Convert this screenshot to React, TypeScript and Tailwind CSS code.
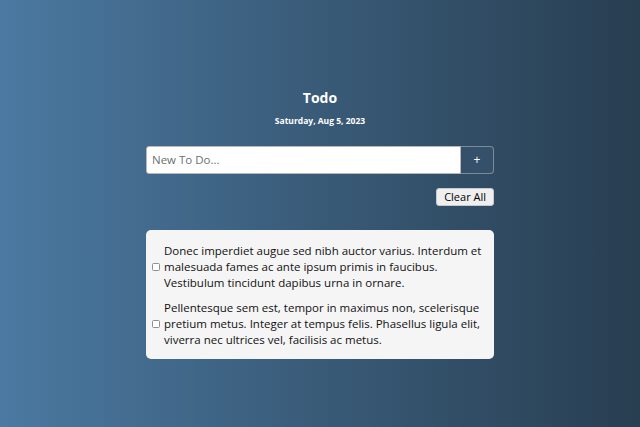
const todos = [
  "Donec imperdiet augue sed nibh auctor varius. Interdum et malesuada fames ac ante ipsum primis in faucibus. Vestibulum tincidunt dapibus urna in ornare.",
  "Pellentesque sem est, tempor in maximus non, scelerisque pretium metus. Integer at tempus felis. Phasellus ligula elit, viverra nec ultrices vel, facilisis ac metus.",
];

export default function App() {
  return (
    <div
      className="min-h-screen bg-linear-to-r from-[#4b79a1] to-[#283e51]"
      style={{ fontFamily: "'Open Sans', 'Noto Sans', sans-serif" }}
    >
      <div className="mx-auto w-[348px] pt-[88px]">
        {/* Header */}
        <h1 className="text-center text-[14px] leading-[20px] font-bold text-white">Todo</h1>
        <p className="mt-[8px] text-center text-[8.5px] leading-[10px] font-bold text-white">
          Saturday, Aug 5, 2023
        </p>

        {/* New todo */}
        <form className="mt-[20px] flex h-[28px]" onSubmit={(e) => e.preventDefault()}>
          <input
            type="text"
            placeholder="New To Do..."
            className="min-w-0 flex-1 rounded-l-[3px] border border-[#b8b8b8] bg-white px-[5px] text-[11.5px] text-black outline-none placeholder:text-[#6f6f6f]"
          />
          <button
            type="submit"
            className="w-[33px] rounded-r-[4px] border border-l-0 border-[#7d8b99] bg-[#34506a] text-[12px] text-white"
          >
            +
          </button>
        </form>

        <div className="mt-[14px] flex justify-end">
          <button className="h-[18px] rounded-[3px] border border-[#c8c8c8] bg-[#efefef] px-[7px] text-[11px] leading-[16px] text-black">
            Clear All
          </button>
        </div>

        {/* List */}
        <ul className="mt-[24px] flex flex-col gap-[9px] rounded-[5px] bg-[#f5f5f5] pt-[13px] pr-[6px] pb-[11px] pl-[6px]">
          {todos.map((t, i) => (
            <li key={i} className="flex items-center gap-[4px]">
              <input type="checkbox" className="h-[8px] w-[8px] shrink-0 appearance-none rounded-[1.5px] border border-[#8f8f8f] bg-white" />
              <span className="text-[11.5px] leading-[16px] text-[#111]">{t}</span>
            </li>
          ))}
        </ul>
      </div>
    </div>
  );
}
